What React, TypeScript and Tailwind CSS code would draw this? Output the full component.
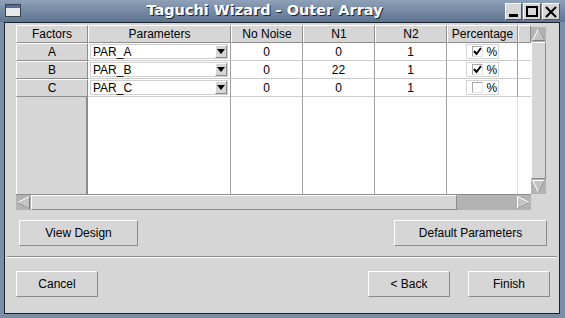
import React from "react";

const rows = [
  { f: "A", p: "PAR_A", nn: "0", n1: "0", n2: "1", pct: true },
  { f: "B", p: "PAR_B", nn: "0", n1: "22", n2: "1", pct: true },
  { f: "C", p: "PAR_C", nn: "0", n1: "0", n2: "1", pct: false },
];

const cols = "grid grid-cols-[72px_143px_72px_72px_72px_71px_13px]";

function ArrowBtn({ dir }: { dir: "up" | "down" | "left" | "right" }) {
  let pts: [number, number][] = [];
  if (dir === "left") pts = [[1.5, 7.5], [13.5, 1.5], [13.5, 13.5]];
  if (dir === "right") pts = [[13.5, 7.5], [1.5, 1.5], [1.5, 13.5]];
  if (dir === "up") pts = [[7.5, 1.5], [1.5, 13.5], [13.5, 13.5]];
  if (dir === "down") pts = [[7.5, 13.5], [1.5, 1.5], [13.5, 1.5]];
  const [a, b, c] = pts;
  const lt = dir === "left" || dir === "up";
  return (
    <div className="w-[15px] h-[15px] bg-[#b3b3b3] shrink-0">
      <svg width="15" height="15" viewBox="0 0 15 15">
        <polygon points={pts.map((p) => p.join(",")).join(" ")} fill="#c4c4c4" />
        <line x1={a[0]} y1={a[1]} x2={b[0]} y2={b[1]} stroke="#ffffff" strokeWidth="1" />
        <line x1={b[0]} y1={b[1]} x2={c[0]} y2={c[1]} stroke={lt ? "#7a7a7a" : "#ffffff"} strokeWidth="1" />
        <line x1={c[0]} y1={c[1]} x2={a[0]} y2={a[1]} stroke="#7a7a7a" strokeWidth="1" strokeDasharray="1 1" />
      </svg>
    </div>
  );
}

function Btn({ label, className }: { label: string; className: string }) {
  return (
    <div
      className={`h-[26px] flex items-center justify-center bg-[#d6d6d6] border border-t-white border-l-white border-r-[#8a8a8a] border-b-[#8a8a8a] text-[12px] ${className}`}
    >
      {label}
    </div>
  );
}

const headCell =
  "h-[18px] flex items-center justify-center bg-[#d6d6d6] border border-t-white border-l-white border-r-[#8c8c8c] border-b-[#8c8c8c] text-[12px] leading-none";
const dataCell =
  "h-[18px] bg-white border-r border-b border-r-[#a0a0a0] border-b-[#cccccc] flex items-center justify-center text-[12px] leading-none";

function Check() {
  return (
    <svg width="9" height="9" viewBox="0 0 9 9">
      <path d="M1 4 L3.5 7 L8 1" fill="none" stroke="#000" strokeWidth="2" />
    </svg>
  );
}

export default function App() {
  return (
    <div className="w-[565px] h-[318px] bg-[#7a8ea8] flex flex-col overflow-hidden text-black font-['Liberation_Sans',Arial,sans-serif]">
      {/* Title bar */}
      <div className="h-[22px] shrink-0 relative flex items-center bg-gradient-to-b from-[#8fa1b8] to-[#5f7491]">
        <div className="absolute left-[5px] top-[4px] w-[16px] h-[13px] bg-[#e8e8e8] border border-[#3a4250]">
          <div className="h-[3px] bg-[#4d6fa8]" />
        </div>
        <div className="flex-1 text-center text-white font-bold text-[14.5px] font-['DejaVu_Sans',sans-serif] [text-shadow:1px_1px_0_#1c2430] mr-[36px]">
          Taguchi Wizard - Outer Array
        </div>
        <div className="absolute right-[5px] top-[3px] flex gap-[1px]">
          <div className="w-[17px] h-[17px] bg-[#d6d6d6] border border-t-white border-l-white border-r-[#555] border-b-[#555] relative">
            <div className="absolute left-[3px] right-[3px] bottom-[2px] h-[3px] bg-black" />
          </div>
          <div className="w-[18px] h-[17px] bg-[#d6d6d6] border border-t-white border-l-white border-r-[#555] border-b-[#555] relative">
            <div className="absolute left-[2px] right-[2px] top-[2px] bottom-[2px] border-2 border-black" />
          </div>
          <div className="w-[18px] h-[17px] bg-[#d6d6d6] border border-t-white border-l-white border-r-[#555] border-b-[#555] flex items-center justify-center">
            <svg width="12" height="12" viewBox="0 0 12 12">
              <path d="M1 1 L11 11 M11 1 L1 11" stroke="#000" strokeWidth="2" />
            </svg>
          </div>
        </div>
      </div>

      {/* Body */}
      <div className="ml-[4px] mr-[5px] h-[292px] shrink-0 border border-[#1a212b] bg-[#d6d6d6] flex flex-col">
        {/* table + scrollbars */}
        <div className="pl-[11px] pt-[2px] flex">
          <div className="w-[515px] flex flex-col">
            <div className="h-[170px] flex flex-col border-b border-b-[#8c8c8c]">
              <div className={cols}>
                <div className={headCell}>Factors</div>
                <div className={headCell}>Parameters</div>
                <div className={headCell}>No Noise</div>
                <div className={headCell}>N1</div>
                <div className={headCell}>N2</div>
                <div className={headCell}>Percentage</div>
                <div className={headCell}></div>
              </div>
              {rows.map((r) => (
                <div key={r.f} className={cols}>
                  <div className={headCell}>{r.f}</div>
                  <div className={`${dataCell} px-[2px]`}>
                    <div className="w-full h-[15px] flex border border-[#d0d0d0] bg-white">
                      <div className="flex-1 pl-[2px] flex items-center text-[12px]">{r.p}</div>
                      <div className="w-[12px] h-[13px] bg-[#d6d6d6] border border-t-white border-l-white border-r-[#8a8a8a] border-b-[#8a8a8a] flex items-center justify-center">
                        <svg width="8" height="6" viewBox="0 0 8 6">
                          <polygon points="0,0 8,0 4,5" fill="#000" />
                        </svg>
                      </div>
                    </div>
                  </div>
                  <div className={dataCell}>{r.nn}</div>
                  <div className={dataCell}>{r.n1}</div>
                  <div className={dataCell}>{r.n2}</div>
                  <div className={dataCell}>
                    <div className="w-[33px] h-[15px] border border-[#d4d4d4] flex items-center pl-[5px] gap-[4px]">
                      <div className="w-[11px] h-[11px] bg-white border border-t-[#a8a8a8] border-l-[#a8a8a8] border-r-[#e4e4e4] border-b-[#e4e4e4] flex items-center justify-center">
                        {r.pct && <Check />}
                      </div>
                      <span className="text-[12px]">%</span>
                    </div>
                  </div>
                  <div className="h-[18px] bg-white border-b border-b-[#cccccc]" />
                </div>
              ))}
              <div className={`${cols} flex-1`}>
                <div className="bg-[#d6d6d6] border-l border-l-white border-r-2 border-r-[#8c8c8c]" />
                <div className="bg-white border-r border-r-[#a0a0a0]" />
                <div className="bg-white border-r border-r-[#a0a0a0]" />
                <div className="bg-white border-r border-r-[#a0a0a0]" />
                <div className="bg-white border-r border-r-[#a0a0a0]" />
                <div className="bg-white border-r border-r-[#e0e0e0]" />
                <div className="bg-white" />
              </div>
            </div>
            {/* horizontal scrollbar */}
            <div className="h-[15px] flex bg-[#b3b3b3]">
              <ArrowBtn dir="left" />
              <div className="w-[426px] bg-[#d6d6d6] border border-t-white border-l-white border-r-[#8a8a8a] border-b-[#8a8a8a]" />
              <div className="flex-1" />
              <ArrowBtn dir="right" />
            </div>
          </div>
          {/* vertical scrollbar */}
          <div className="w-[15px] h-[169px] pt-[2px] flex flex-col bg-[#d6d6d6]">
            <ArrowBtn dir="up" />
            <div className="flex-1 bg-[#d6d6d6] border border-t-white border-l-white border-r-[#8a8a8a] border-b-[#8a8a8a]" />
            <ArrowBtn dir="down" />
          </div>
        </div>

        {/* middle buttons */}
        <div className="mt-[10px] flex justify-between pl-[14px] pr-[12px]">
          <Btn label="View Design" className="w-[119px]" />
          <Btn label="Default Parameters" className="w-[153px]" />
        </div>

        {/* separator */}
        <div className="mt-[10px] mx-[2px] border-t border-t-[#8c8c8c] border-b border-b-white" />

        {/* bottom buttons */}
        <div className="mt-[13px] flex pl-[11px] pr-[9px]">
          <Btn label="Cancel" className="w-[82px]" />
          <div className="flex-1" />
          <Btn label="< Back" className="w-[82px]" />
          <div className="w-[18px]" />
          <Btn label="Finish" className="w-[82px]" />
        </div>
      </div>
    </div>
  );
}
